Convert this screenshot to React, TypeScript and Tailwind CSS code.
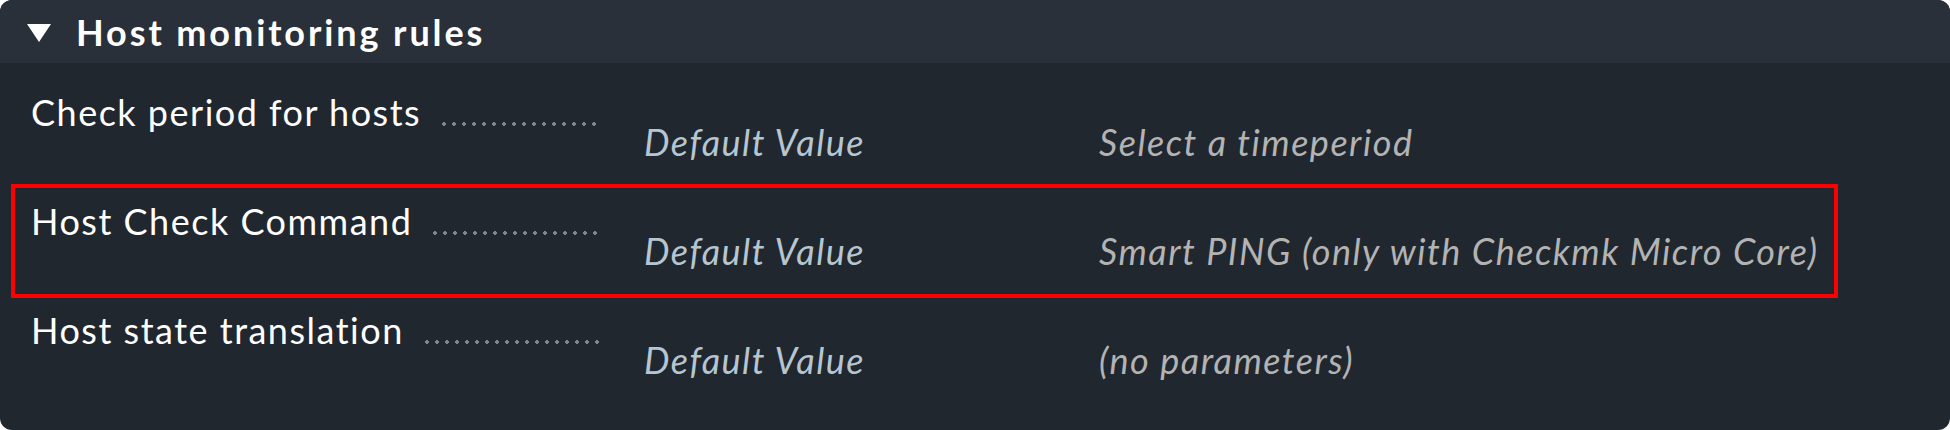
import React from "react";

const rows = [
  { label: "Check period for hosts", value: "Select a timeperiod" },
  { label: "Host Check Command", value: "Smart PING (only with Checkmk Micro Core)", marked: true },
  { label: "Host state translation", value: "(no parameters)" },
];

export default function App() {
  return (
    <div className="w-[1950px] h-[430px] bg-white">
      <div className="w-[1950px] h-[430px] rounded-[12px] overflow-hidden bg-[#21272f] font-['Lato',sans-serif]">
        <div className="h-[63px] bg-[#29303a] flex items-center pl-[27px]">
          <svg width="24" height="18" viewBox="0 0 24 18" className="mt-[2px]">
            <polygon points="0,0 24,0 12,18" fill="#ffffff" />
          </svg>
          <span className="ml-[25px] text-white font-bold text-[36px] tracking-[2.9px] leading-[40px]">
            Host monitoring rules
          </span>
        </div>
        <div className="pt-[9px]">
          {rows.map((r) => (
            <div key={r.label} className="relative h-[109px] flex items-start">
              <div className="w-[599px] pl-[31px] pt-[20px] flex items-end">
                <span className="text-white text-[36px] leading-[40px] tracking-[1.5px] whitespace-nowrap">
                  {r.label}
                </span>
                <span className="flex-1 ml-[18px] mb-[6px] h-[4px] bg-[radial-gradient(circle,#80868e_1.6px,transparent_1.9px)] bg-[length:10px_4px]" />
              </div>
              <div className="pl-[45px] pt-[50px] w-[500px] text-[36px] leading-[40px] italic text-[#b6c6d0] tracking-[1.5px] whitespace-nowrap">
                Default Value
              </div>
              <div className="pt-[50px] text-[36px] leading-[40px] italic text-[#b3b3b3] tracking-[1.5px] whitespace-nowrap">
                {r.value}
              </div>
              {r.marked && (
                <div className="absolute left-[11px] top-[3px] w-[1827px] h-[114px] border-[4px] border-[#ff0000]" />
              )}
            </div>
          ))}
        </div>
      </div>
    </div>
  );
}
